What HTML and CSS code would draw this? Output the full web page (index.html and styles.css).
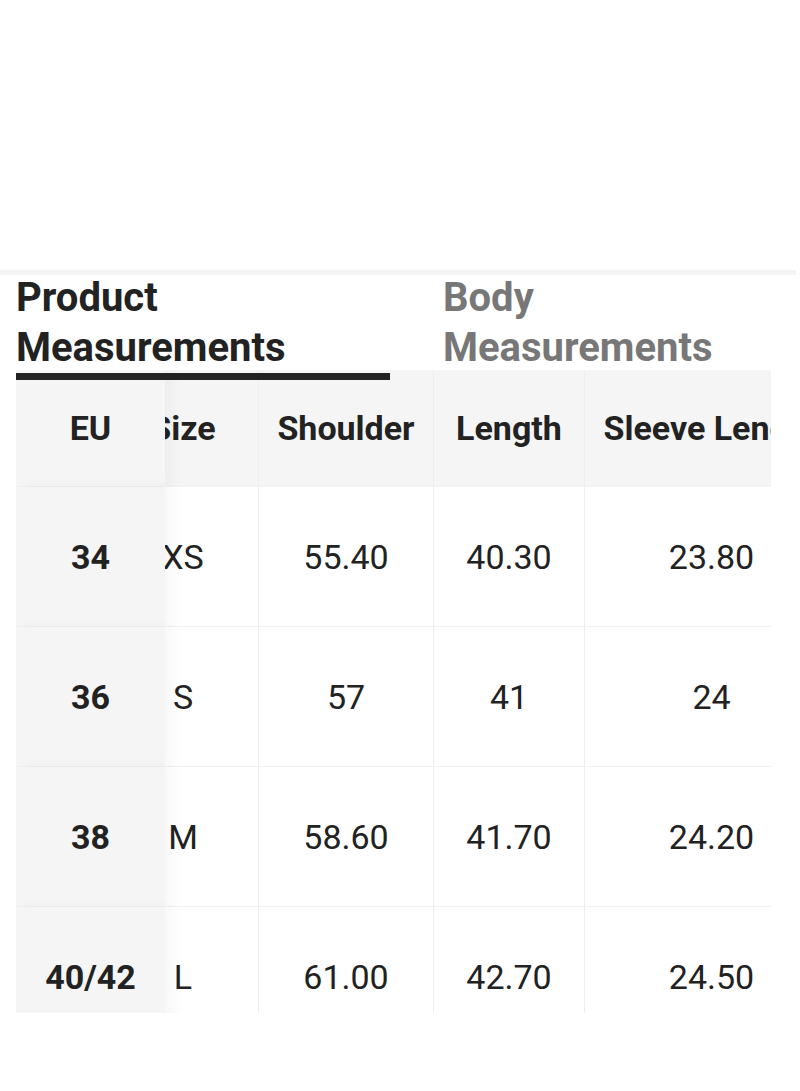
FILE: index.html
```html
<!DOCTYPE html>
<html>
<head>
<meta charset="utf-8">
<link rel="stylesheet" href="styles.css">
</head>
<body>
<div class="spacer"></div>
<div class="band"></div>
<div class="tabs">
  <div class="tab active">Product<br>Measurements</div>
  <div class="tab">Body<br>Measurements</div>
</div>
<div class="table">
  <div class="row head">
    <div class="cell eu">EU</div>
    <div class="cell size">Size</div>
    <div class="cell shoulder">Shoulder</div>
    <div class="cell length">Length</div>
    <div class="cell sleeve">Sleeve Length</div>
  </div>
  <div class="row">
    <div class="cell eu">34</div>
    <div class="cell size">XS</div>
    <div class="cell shoulder">55.40</div>
    <div class="cell length">40.30</div>
    <div class="cell sleeve">23.80</div>
  </div>
  <div class="row">
    <div class="cell eu">36</div>
    <div class="cell size">S</div>
    <div class="cell shoulder">57</div>
    <div class="cell length">41</div>
    <div class="cell sleeve">24</div>
  </div>
  <div class="row">
    <div class="cell eu">38</div>
    <div class="cell size">M</div>
    <div class="cell shoulder">58.60</div>
    <div class="cell length">41.70</div>
    <div class="cell sleeve">24.20</div>
  </div>
  <div class="row">
    <div class="cell eu">40/42</div>
    <div class="cell size">L</div>
    <div class="cell shoulder">61.00</div>
    <div class="cell length">42.70</div>
    <div class="cell sleeve">24.50</div>
  </div>
</div>
</body>
</html>
```
FILE: styles.css
```css
html, body {
  margin: 0;
  padding: 0;
  background: #fff;
  font-family: Roboto, "Liberation Sans", sans-serif;
  color: #222;
}
.spacer { height: 270px; }
.band {
  width: 796px;
  height: 5px;
  background: #f4f4f4;
}
.tabs {
  display: flex;
  padding-left: 16px;
}
.tab {
  position: relative;
  font-size: 40px;
  font-weight: 700;
  line-height: 50px;
  color: #777;
  height: 97px;
  margin-top: -2px;
  white-space: nowrap;
}
.tab.active {
  color: #222;
  width: 374px;
  margin-right: 53px;
}
.tab.active::after {
  content: "";
  position: absolute;
  left: 0;
  right: 0;
  bottom: -10px;
  height: 7px;
  background: #222;
  z-index: 3;
}
.table {
  margin-left: 16px;
  width: 755px;
  height: 643px;
  overflow: hidden;
}
.row {
  display: flex;
  height: 140px;
  border-bottom: 1px solid #f1f1f1;
  box-sizing: border-box;
  white-space: nowrap;
}
.row.head {
  height: 117px;
  background: #f5f5f5;
  font-weight: 700;
}
.cell {
  flex: none;
  display: flex;
  align-items: center;
  justify-content: center;
  font-size: 34px;
  box-sizing: border-box;
}
.eu {
  width: 149px;
  background: #f5f5f5;
  font-weight: 700;
  position: relative;
  z-index: 2;
  box-shadow: 8px 0 14px rgba(0, 0, 0, 0.035);
}
.size {
  width: 150px;
  margin-left: -57px;
}
.shoulder {
  width: 175px;
  border-left: 1px solid #eeeeee;
}
.length {
  width: 151px;
  border-left: 1px solid #eeeeee;
}
.sleeve {
  width: 254px;
  border-left: 1px solid #eeeeee;
}
```
